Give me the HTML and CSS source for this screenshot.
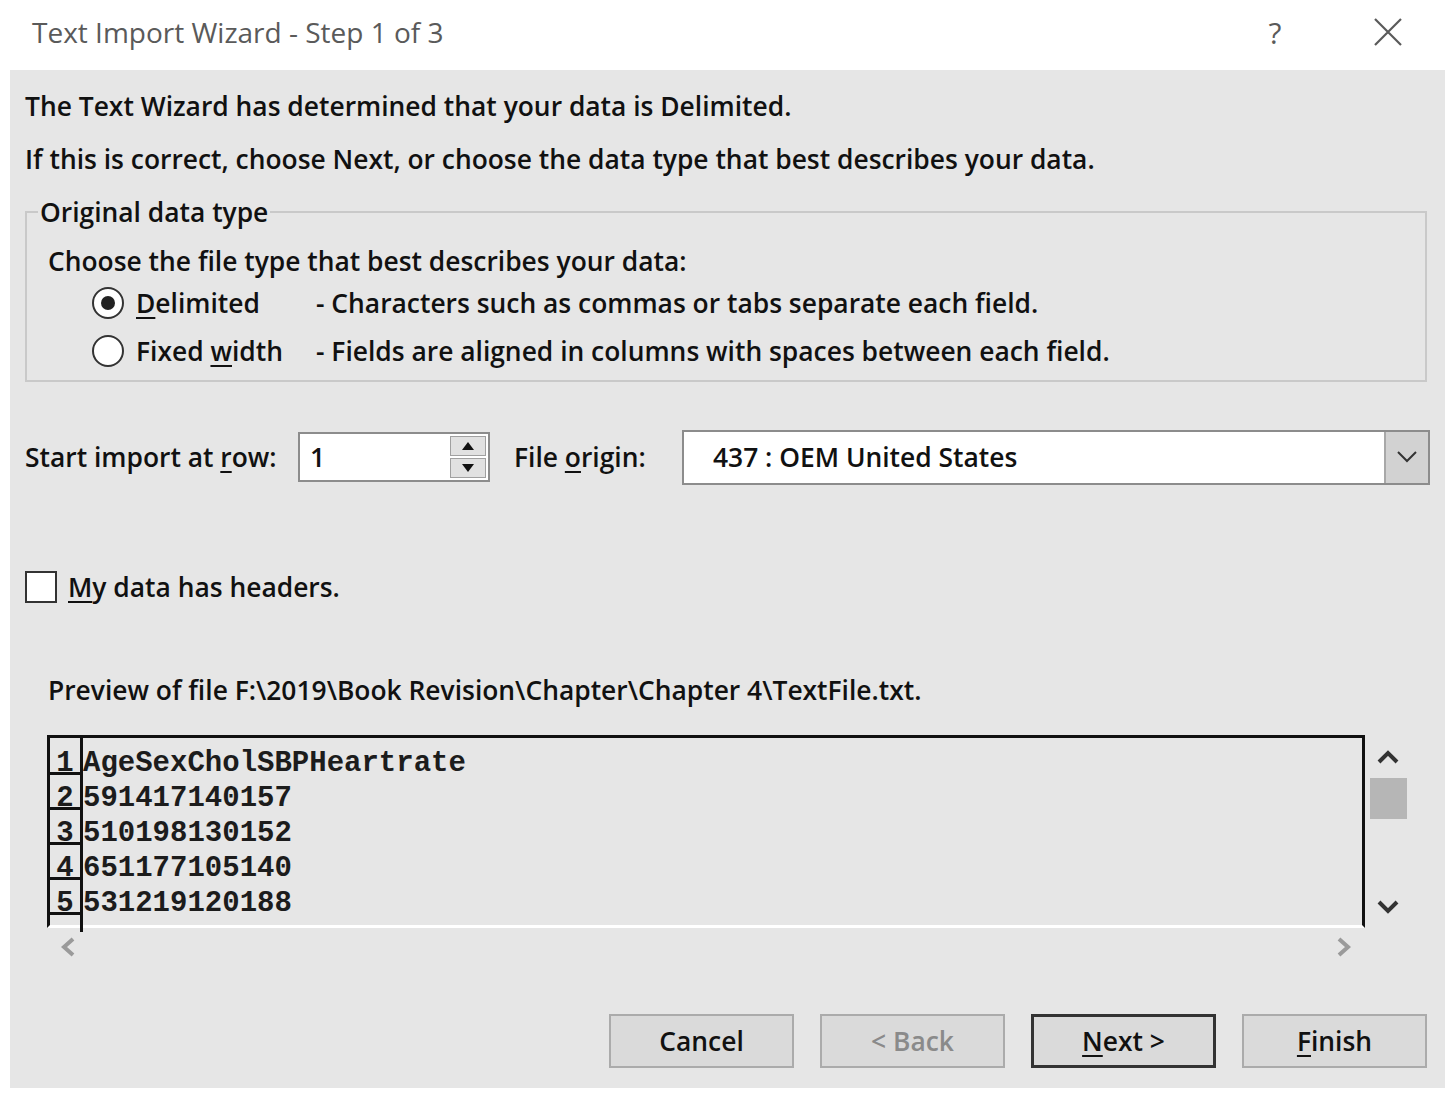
FILE: index.html
```html
<!DOCTYPE html>
<html lang="en">
<head>
    <meta charset="UTF-8">
    <meta name="viewport" content="width=device-width, initial-scale=1.0">
    <link rel="stylesheet" href="styles.css">
    <title>Text Import Wizard</title>
</head>
<body>
    <div class="titlebar">
        <span class="title">Text Import Wizard - Step 1 of 3</span>
        <span class="title-help">?</span>
        <span class="title-close">
            <svg width="30" height="30" viewBox="0 0 30 30"><path d="M2 2 L28 28 M28 2 L2 28" stroke="#5a5a5a" stroke-width="2.2" fill="none"/></svg>
        </span>
    </div>

    <div class="dialog">
        <p class="intro">The Text Wizard has determined that your data is Delimited.</p>
        <p class="intro">If this is correct, choose Next, or choose the data type that best describes your data.</p>

        <fieldset class="group">
            <legend>Original data type</legend>
            <div class="group-caption">Choose the file type that best describes your data:</div>
            <div class="radio-row">
                <span class="radio checked"></span>
                <span class="radio-label"><u>D</u>elimited</span>
                <span class="radio-desc">- Characters such as commas or tabs separate each field.</span>
            </div>
            <div class="radio-row">
                <span class="radio"></span>
                <span class="radio-label">Fixed <u>w</u>idth</span>
                <span class="radio-desc">- Fields are aligned in columns with spaces between each field.</span>
            </div>
        </fieldset>

        <div class="origin-row">
            <span class="row-label">Start import at <u>r</u>ow:</span>
            <div class="spinner">
                <span class="spinner-value">1</span>
                <div class="spinner-btns">
                    <span class="spin-btn">
                        <svg width="12" height="8" viewBox="0 0 12 8"><path d="M0 8 L6 0 L12 8 Z" fill="#111"/></svg>
                    </span>
                    <span class="spin-btn">
                        <svg width="12" height="8" viewBox="0 0 12 8"><path d="M0 0 L6 8 L12 0 Z" fill="#111"/></svg>
                    </span>
                </div>
            </div>
            <span class="origin-label">File <u>o</u>rigin:</span>
            <div class="combo">
                <span class="combo-value">437 : OEM United States</span>
                <span class="combo-btn">
                    <svg width="20" height="12" viewBox="0 0 20 12"><path d="M1 1 L10 10 L19 1" stroke="#333" stroke-width="2" fill="none"/></svg>
                </span>
            </div>
        </div>

        <div class="check-row">
            <span class="checkbox"></span>
            <span class="check-label"><u>M</u>y data has headers.</span>
        </div>

        <div class="preview-label">Preview of file F:\2019\Book Revision\Chapter\Chapter 4\TextFile.txt.</div>

        <div class="preview">
            <div class="preview-box">
                <div class="preview-line"><span class="line-no">1</span><span class="line-text">AgeSexCholSBPHeartrate</span></div>
                <div class="preview-line"><span class="line-no">2</span><span class="line-text">591417140157</span></div>
                <div class="preview-line"><span class="line-no">3</span><span class="line-text">510198130152</span></div>
                <div class="preview-line"><span class="line-no">4</span><span class="line-text">651177105140</span></div>
                <div class="preview-line"><span class="line-no">5</span><span class="line-text">531219120188</span></div>
                <div class="preview-line stub"><span class="line-no"></span></div>
            </div>
            <div class="vscroll">
                <span class="vscroll-arrow">
                    <svg width="22" height="14" viewBox="0 0 22 14"><path d="M2 12 L11 3 L20 12" stroke="#333" stroke-width="4" fill="none"/></svg>
                </span>
                <span class="vscroll-thumb"></span>
                <span class="vscroll-space"></span>
                <span class="vscroll-arrow">
                    <svg width="22" height="14" viewBox="0 0 22 14"><path d="M2 2 L11 11 L20 2" stroke="#333" stroke-width="4" fill="none"/></svg>
                </span>
            </div>
            <div class="hscroll">
                <svg width="14" height="20" viewBox="0 0 14 20"><path d="M12 2 L3 10 L12 18" stroke="#9a9a9a" stroke-width="4" fill="none"/></svg>
                <svg width="14" height="20" viewBox="0 0 14 20"><path d="M2 2 L11 10 L2 18" stroke="#9a9a9a" stroke-width="4" fill="none"/></svg>
            </div>
        </div>

        <div class="buttons">
            <button class="btn">Cancel</button>
            <button class="btn disabled">&lt; Back</button>
            <button class="btn default"><u>N</u>ext &gt;</button>
            <button class="btn"><u>F</u>inish</button>
        </div>
    </div>
</body>
</html>
```

FILE: styles.css
```css
body {
    margin: 0;
    background-color: #ffffff;
    font-family: 'Open Sans', 'Noto Sans', sans-serif;
    color: #111111;
    width: 1452px;
    height: 1100px;
    overflow: hidden;
}

u {
    text-decoration-thickness: 2px;
    text-underline-offset: 4px;
}

.titlebar {
    height: 64px;
    display: flex;
    align-items: center;
    padding: 0 44px 0 32px;
}

.title {
    flex: 1;
    font-size: 28px;
    color: #5a5a5a;
}

.title-help {
    width: 40px;
    text-align: center;
    font-size: 30px;
    color: #5a5a5a;
}

.title-close {
    width: 40px;
    margin-left: 73px;
    display: flex;
    justify-content: center;
}

.dialog {
    margin: 6px 7px 0 10px;
    height: 1018px;
    box-sizing: border-box;
    background-color: #e6e6e6;
    padding: 10px 18px 20px 15px;
    display: flex;
    flex-direction: column;
    font-size: 26.4px;
    font-weight: 600;
}

.intro {
    margin: 0;
    line-height: 53px;
    white-space: nowrap;
}

.group {
    margin: 8px 0 0 0;
    padding: 0 0 5px 21px;
    border: 2px solid #c9c9c9;
    min-width: 0;
}

.group legend {
    margin-left: -10px;
    padding: 0 2px;
    line-height: 36px;
}

.group-caption {
    margin-top: 14px;
    line-height: 35px;
}

.radio-row {
    display: flex;
    align-items: center;
    height: 48px;
    padding-left: 44px;
}

.radio {
    width: 28px;
    height: 28px;
    border: 2px solid #333;
    border-radius: 50%;
    background-color: #ffffff;
    display: flex;
    align-items: center;
    justify-content: center;
    flex-shrink: 0;
}

.radio.checked::after {
    content: "";
    width: 14px;
    height: 14px;
    border-radius: 50%;
    background-color: #222;
}

.radio-label {
    width: 180px;
    margin-left: 12px;
    flex-shrink: 0;
}

.radio-desc {
    white-space: nowrap;
}

.origin-row {
    margin-top: 47px;
    height: 56px;
    display: flex;
    align-items: center;
}

.row-label {
    width: 273px;
    flex-shrink: 0;
    white-space: nowrap;
}

.spinner {
    width: 192px;
    height: 50px;
    flex-shrink: 0;
    box-sizing: border-box;
    border: 2px solid #8c8c8c;
    background-color: #ffffff;
    display: flex;
    align-items: center;
    padding: 0 2px 0 10px;
}

.spinner-value {
    flex: 1;
}

.spinner-btns {
    display: flex;
    flex-direction: column;
    gap: 2px;
}

.spin-btn {
    width: 36px;
    height: 20px;
    box-sizing: border-box;
    border: 1px solid #a0a0a0;
    background-color: #e1e1e1;
    display: flex;
    align-items: center;
    justify-content: center;
}

.origin-label {
    width: 168px;
    margin-left: 24px;
    flex-shrink: 0;
    white-space: nowrap;
}

.combo {
    flex: 1;
    margin-right: -3px;
    height: 55px;
    box-sizing: border-box;
    border: 2px solid #8c8c8c;
    background-color: #ffffff;
    display: flex;
    align-items: stretch;
}

.combo-value {
    flex: 1;
    padding-left: 29px;
    display: flex;
    align-items: center;
}

.combo-btn {
    width: 42px;
    background-color: #d2d2d2;
    border-left: 2px solid #a8a8a8;
    display: flex;
    align-items: center;
    justify-content: center;
}

.check-row {
    margin-top: 84px;
    height: 36px;
    display: flex;
    align-items: center;
}

.checkbox {
    width: 28px;
    height: 28px;
    border: 2px solid #333;
    background-color: #ffffff;
    margin-right: 11px;
}

.preview-label {
    margin-top: 67px;
    padding-left: 23px;
    line-height: 36px;
    white-space: nowrap;
}

.preview {
    margin-top: 27px;
    margin-left: 22px;
    display: grid;
    grid-template-columns: 1318px 42px;
}

.preview-box {
    border: 3px solid #111;
    border-bottom-color: #ffffff;
    font-family: 'Liberation Mono', 'DejaVu Sans Mono', monospace;
    font-weight: bold;
    font-size: 29px;
    color: #1c1c1c;
    display: flex;
    flex-direction: column;
}

.preview-line {
    height: 35px;
    display: flex;
}

.preview-line:first-child {
    height: 37px;
}

.preview-line.stub {
    height: 10px;
}

.line-no {
    width: 33px;
    box-sizing: border-box;
    border-right: 3px solid #111;
    border-bottom: 3px solid #111;
    text-align: center;
    padding-top: 17px;
    line-height: 14px;
}

.preview-line:first-child .line-no,
.preview-line:first-child .line-text {
    padding-top: 19px;
}

.preview-line.stub .line-no {
    border-bottom: none;
}

.line-text {
    padding-top: 17px;
    line-height: 14px;
}

.vscroll {
    display: flex;
    flex-direction: column;
    align-items: center;
    padding-left: 4px;
}

.vscroll-arrow {
    height: 43px;
    display: flex;
    align-items: center;
    justify-content: center;
}

.vscroll-thumb {
    width: 37px;
    height: 41px;
    background-color: #b6b6b6;
}

.vscroll-space {
    flex: 1;
}

.hscroll {
    height: 38px;
    display: flex;
    align-items: center;
    justify-content: space-between;
    padding: 0 14px 0 14px;
}

.buttons {
    margin-top: auto;
    display: flex;
    justify-content: flex-end;
    gap: 26px;
}

.btn {
    width: 185px;
    height: 54px;
    box-sizing: border-box;
    border: 2px solid #ababab;
    background-color: #dadada;
    font-family: 'Open Sans', 'Noto Sans', sans-serif;
    font-size: 26.4px;
    font-weight: 600;
    color: #111111;
    padding: 0;
}

.btn.disabled {
    color: #8a8a8a;
}

.btn.default {
    border: 3px solid #333;
}
```
